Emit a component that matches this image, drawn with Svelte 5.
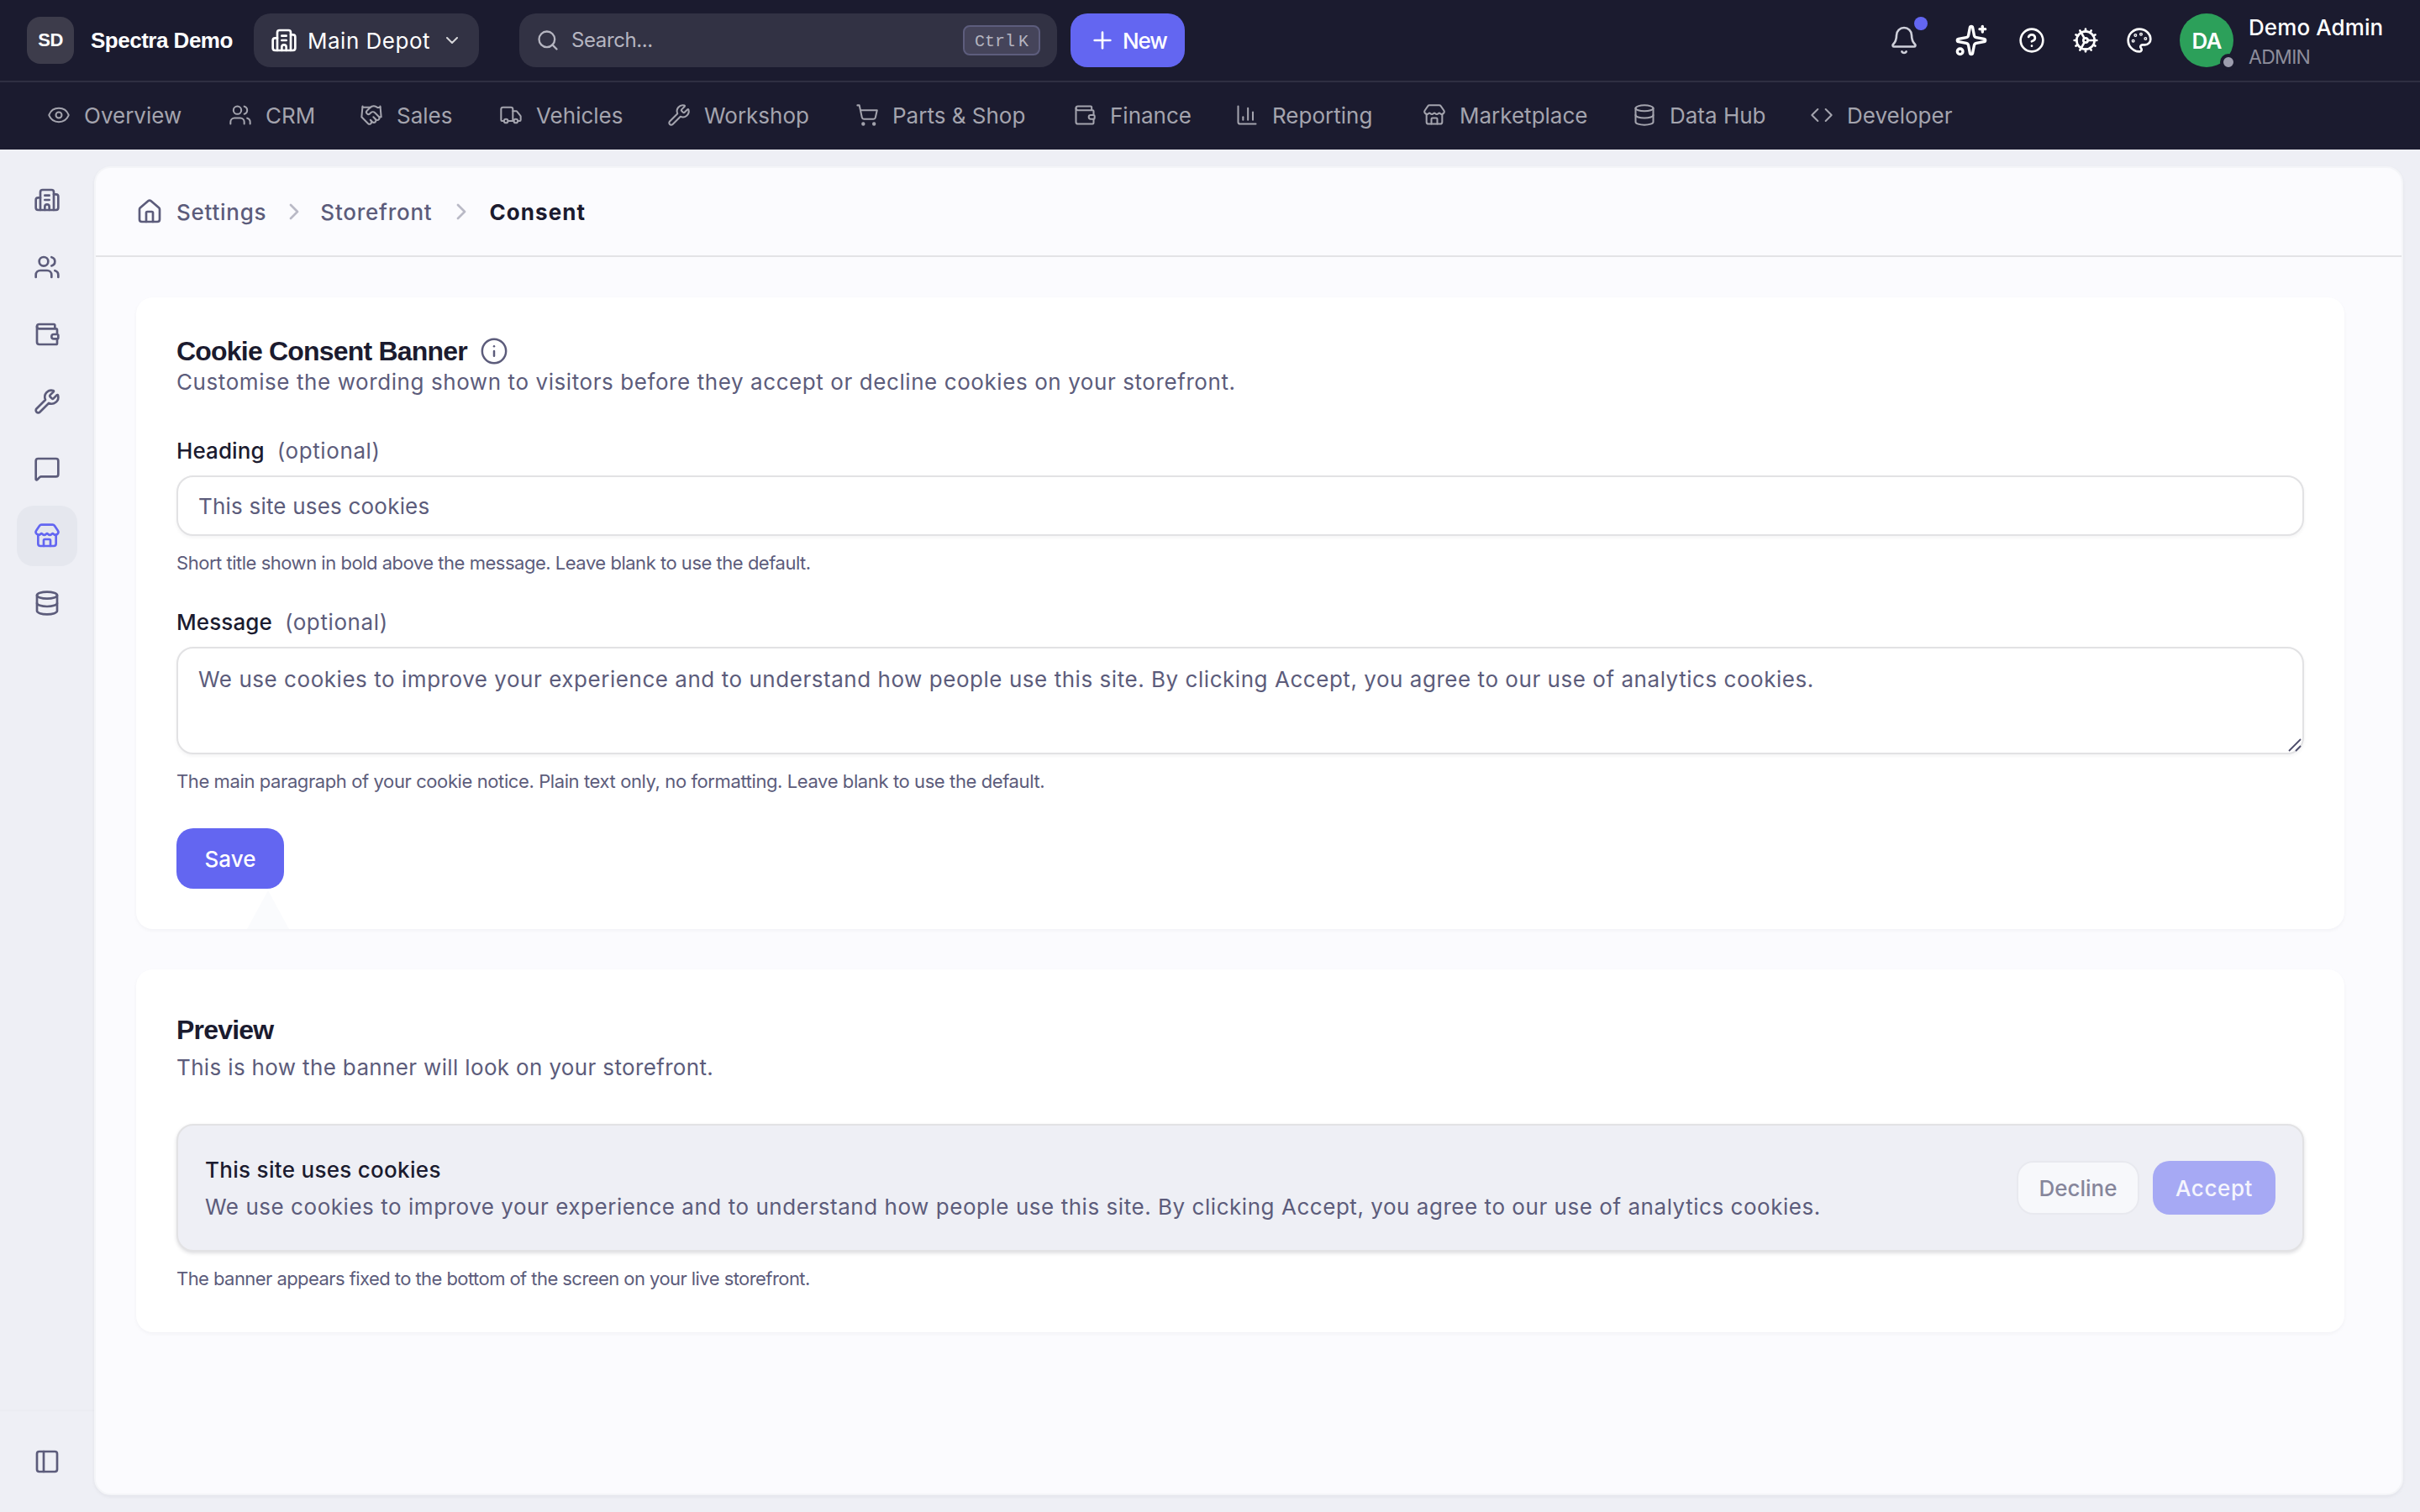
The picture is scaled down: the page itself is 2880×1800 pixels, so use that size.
<script>
    const icons = {
        building: '<path d="M10 12h4"/><path d="M10 8h4"/><path d="M14 21v-3a2 2 0 0 0-4 0v3"/><path d="M6 10H4a2 2 0 0 0-2 2v7a2 2 0 0 0 2 2h16a2 2 0 0 0 2-2V9a2 2 0 0 0-2-2h-2"/><path d="M6 21V5a2 2 0 0 1 2-2h8a2 2 0 0 1 2 2v16"/>',
        users: '<path d="M16 21v-2a4 4 0 0 0-4-4H6a4 4 0 0 0-4 4v2"/><path d="M16 3.128a4 4 0 0 1 0 7.744"/><path d="M22 21v-2a4 4 0 0 0-3-3.87"/><circle cx="9" cy="7" r="4"/>',
        eye: '<path d="M2.062 12.348a1 1 0 0 1 0-.696 10.75 10.75 0 0 1 19.876 0 1 1 0 0 1 0 .696 10.75 10.75 0 0 1-19.876 0"/><circle cx="12" cy="12" r="3"/>',
        handshake: '<path d="m11 17 2 2a1 1 0 1 0 3-3"/><path d="m14 14 2.5 2.5a1 1 0 1 0 3-3l-3.88-3.88a3 3 0 0 0-4.24 0l-.88.88a1 1 0 1 1-3-3l2.81-2.81a5.79 5.79 0 0 1 7.06-.87l.47.28a2 2 0 0 0 1.42.25L21 4"/><path d="m21 3 1 11h-2"/><path d="M3 3 2 14l6.5 6.5a1 1 0 1 0 3-3"/><path d="M3 4h8"/>',
        truck: '<path d="M14 18V6a2 2 0 0 0-2-2H4a2 2 0 0 0-2 2v11a1 1 0 0 0 1 1h2"/><path d="M15 18H9"/><path d="M19 18h2a1 1 0 0 0 1-1v-3.65a1 1 0 0 0-.22-.624l-3.48-4.35A1 1 0 0 0 17.52 8H14"/><circle cx="17" cy="18" r="2"/><circle cx="7" cy="18" r="2"/>',
        wrench: '<path d="M14.7 6.3a1 1 0 0 0 0 1.4l1.6 1.6a1 1 0 0 0 1.4 0l3.106-3.105c.32-.322.863-.22.983.218a6 6 0 0 1-8.259 7.057l-7.91 7.91a1 1 0 0 1-2.999-3l7.91-7.91a6 6 0 0 1 7.057-8.259c.438.12.54.662.219.984z"/>',
        cart: '<circle cx="8" cy="21" r="1"/><circle cx="19" cy="21" r="1"/><path d="M2.05 2.05h2l2.66 12.42a2 2 0 0 0 2 1.58h9.78a2 2 0 0 0 1.95-1.57l1.65-7.43H5.12"/>',
        wallet: '<path d="M19 7V4a1 1 0 0 0-1-1H5a2 2 0 0 0 0 4h15a1 1 0 0 1 1 1v4h-3a2 2 0 0 0 0 4h3a1 1 0 0 0 1-1v-2a1 1 0 0 0-1-1"/><path d="M3 5v14a2 2 0 0 0 2 2h15a1 1 0 0 0 1-1v-4"/>',
        chart: '<path d="M3 3v16a2 2 0 0 0 2 2h16"/><path d="M18 17V9"/><path d="M13 17V5"/><path d="M8 17v-3"/>',
        store: '<path d="M15 21v-5a1 1 0 0 0-1-1h-4a1 1 0 0 0-1 1v5"/><path d="M17.774 10.31a1.12 1.12 0 0 0-1.549 0 2.5 2.5 0 0 1-3.451 0 1.12 1.12 0 0 0-1.548 0 2.5 2.5 0 0 1-3.452 0 1.12 1.12 0 0 0-1.549 0 2.5 2.5 0 0 1-3.77-3.248l2.889-4.184A2 2 0 0 1 7 2h10a2 2 0 0 1 1.653.873l2.895 4.192a2.5 2.5 0 0 1-3.774 3.244"/><path d="M4 10.95V19a2 2 0 0 0 2 2h12a2 2 0 0 0 2-2v-8.05"/>',
        database: '<ellipse cx="12" cy="5" rx="9" ry="3"/><path d="M3 5V19A9 3 0 0 0 21 19V5"/><path d="M3 12A9 3 0 0 0 21 12"/>',
        code: '<path d="m16 18 6-6-6-6"/><path d="m8 6-6 6 6 6"/>',
        bell: '<path d="M10.268 21a2 2 0 0 0 3.464 0"/><path d="M3.262 15.326A1 1 0 0 0 4 17h16a1 1 0 0 0 .74-1.673C19.41 13.956 18 12.499 18 8A6 6 0 0 0 6 8c0 4.499-1.411 5.956-2.738 7.326"/>',
        sparkles: '<path d="M11.017 2.814a1 1 0 0 1 1.966 0l1.051 5.558a2 2 0 0 0 1.594 1.594l5.558 1.051a1 1 0 0 1 0 1.966l-5.558 1.051a2 2 0 0 0-1.594 1.594l-1.051 5.558a1 1 0 0 1-1.966 0l-1.051-5.558a2 2 0 0 0-1.594-1.594l-5.558-1.051a1 1 0 0 1 0-1.966l5.558-1.051a2 2 0 0 0 1.594-1.594z"/><path d="M20 2v4"/><path d="M22 4h-4"/><circle cx="4" cy="20" r="2"/>',
        help: '<circle cx="12" cy="12" r="10"/><path d="M9.09 9a3 3 0 0 1 5.83 1c0 2-3 3-3 3"/><path d="M12 17h.01"/>',
        cog: '<path d="M11 10.27 7 3.34"/><path d="m11 13.73-4 6.93"/><path d="M12 22v-2"/><path d="M12 2v2"/><path d="M14 12h8"/><path d="m17 20.66-1-1.73"/><path d="m17 3.34-1 1.73"/><path d="M2 12h2"/><path d="m20.66 17-1.73-1"/><path d="m20.66 7-1.73 1"/><path d="m3.34 17 1.73-1"/><path d="m3.34 7 1.73 1"/><circle cx="12" cy="12" r="2"/><circle cx="12" cy="12" r="8"/>',
        palette: '<path d="M12 22a1 1 0 0 1 0-20 10 9 0 0 1 10 9 5 5 0 0 1-5 5h-2.25a1.75 1.75 0 0 0-1.4 2.8l.3.4a1.75 1.75 0 0 1-1.4 2.8z"/><circle cx="13.5" cy="6.5" r=".5"/><circle cx="17.5" cy="10.5" r=".5"/><circle cx="6.5" cy="12.5" r=".5"/><circle cx="8.5" cy="7.5" r=".5"/>',
        home: '<path d="M15 21v-8a1 1 0 0 0-1-1h-4a1 1 0 0 0-1 1v8"/><path d="M3 10a2 2 0 0 1 .709-1.528l7-6a2 2 0 0 1 2.582 0l7 6A2 2 0 0 1 21 10v9a2 2 0 0 1-2 2H5a2 2 0 0 1-2-2z"/>',
        message: '<path d="M22 17a2 2 0 0 1-2 2H6.828a2 2 0 0 0-1.414.586l-2.202 2.202A.71.71 0 0 1 2 21.286V5a2 2 0 0 1 2-2h16a2 2 0 0 1 2 2z"/>',
        panel: '<rect width="18" height="18" x="3" y="3" rx="2"/><path d="M9 3v18"/>',
        search: '<path d="m21 21-4.34-4.34"/><circle cx="11" cy="11" r="8"/>',
        plus: '<path d="M5 12h14"/><path d="M12 5v14"/>',
        down: '<path d="m6 9 6 6 6-6"/>',
        right: '<path d="m9 18 6-6-6-6"/>',
        info: '<circle cx="12" cy="12" r="10"/><path d="M12 16v-4"/><path d="M12 8h.01"/>',
    };

    const nav = [
        { label: "Overview", icon: "eye", width: 116 },
        { label: "CRM", icon: "users", width: 56 },
        { label: "Sales", icon: "handshake", width: 66 },
        { label: "Vehicles", icon: "truck", width: 100 },
        { label: "Workshop", icon: "wrench", width: 124 },
        { label: "Parts & Shop", icon: "cart", width: 159 },
        { label: "Finance", icon: "wallet", width: 93 },
        { label: "Reporting", icon: "chart", width: 123 },
        { label: "Marketplace", icon: "store", width: 150 },
        { label: "Data Hub", icon: "database", width: 111 },
        { label: "Developer", icon: "code", width: 126 },
    ];

    const rail = ["building", "users", "wallet", "wrench", "message", "store", "database"];

    const defaultHeading = "This site uses cookies";
    const defaultMessage =
        "We use cookies to improve your experience and to understand how people use this site. By clicking Accept, you agree to our use of analytics cookies.";

    let heading = "";
    let message = "";
</script>

{#snippet icon(name, size = 32, stroke = 2)}
    <svg
        width={size}
        height={size}
        viewBox="0 0 24 24"
        fill="none"
        stroke="currentColor"
        stroke-width={stroke}
        stroke-linecap="round"
        stroke-linejoin="round"
    >{@html icons[name]}</svg>
{/snippet}

<div class="app">
    <header class="topbar">
        <div class="logo">SD</div>
        <span class="brand">Spectra Demo</span>
        <button class="depot">
            {@render icon("building", 32)}
            <span>Main Depot</span>
            {@render icon("down", 24)}
        </button>
        <div class="search">
            {@render icon("search", 28)}
            <span>Search...</span>
            <kbd>Ctrl K</kbd>
        </div>
        <button class="new">
            {@render icon("plus", 32)}
            <span>New</span>
        </button>
        <div class="tools">
            <span class="tool bell">
                {@render icon("bell", 36, 1.75)}
                <i class="badge"></i>
            </span>
            <span class="tool spark">{@render icon("sparkles", 40)}</span>
            <span class="tool">{@render icon("help", 32)}</span>
            <span class="tool">{@render icon("cog", 32)}</span>
            <span class="tool">{@render icon("palette", 32)}</span>
        </div>
        <div class="avatar">DA<i class="presence"></i></div>
        <div class="user">
            <span class="user-name">Demo Admin</span>
            <span class="user-role">ADMIN</span>
        </div>
    </header>

    <nav class="mainnav">
        {#each nav as item}
            <a href="#top">
                {@render icon(item.icon, 28, 1.75)}
                <span style="width: {item.width}px">{item.label}</span>
            </a>
        {/each}
    </nav>

    <div class="body">
        <aside class="rail">
            {#each rail as name}
                <a href="#top" class:active={name === "store"}>{@render icon(name)}</a>
            {/each}
            <div class="collapse">{@render icon("panel")}</div>
        </aside>

        <main class="panel">
            <div class="crumbs">
                {@render icon("home")}
                <span class="crumb first">Settings</span>
                <span class="sep">{@render icon("right")}</span>
                <span class="crumb">Storefront</span>
                <span class="sep last">{@render icon("right")}</span>
                <span class="crumb current">Consent</span>
            </div>

            <div class="content">
                <section class="card form">
                    <div class="title-row">
                        <h2>Cookie Consent Banner</h2>
                        {@render icon("info", 34, 1.75)}
                    </div>
                    <p class="desc wide">Customise the wording shown to visitors before they accept or decline cookies on your storefront.</p>

                    <label for="heading">Heading <span>(optional)</span></label>
                    <input id="heading" bind:value={heading} placeholder={defaultHeading} />
                    <p class="hint">Short title shown in bold above the message. Leave blank to use the default.</p>

                    <label for="message">Message <span>(optional)</span></label>
                    <div class="area">
                        <textarea id="message" bind:value={message} placeholder={defaultMessage}></textarea>
                        <svg class="grip" width="16" height="16" viewBox="0 0 16 16" fill="none" stroke="#4d4d6b" stroke-width="1.8">
                            <path d="M1 15 15 1M9 15l6-6" />
                        </svg>
                    </div>
                    <p class="hint long">The main paragraph of your cookie notice. Plain text only, no formatting. Leave blank to use the default.</p>

                    <div class="actions">
                        <button class="save">Save</button>
                        <i class="arrow"></i>
                    </div>
                </section>

                <section class="card preview">
                    <h2>Preview</h2>
                    <p class="desc">This is how the banner will look on your storefront.</p>
                    <div class="banner">
                        <div class="banner-text">
                            <strong>{heading || defaultHeading}</strong>
                            <p>{message || defaultMessage}</p>
                        </div>
                        <button class="decline" disabled>Decline</button>
                        <button class="accept" disabled>Accept</button>
                    </div>
                    <p class="hint short">The banner appears fixed to the bottom of the screen on your live storefront.</p>
                </section>
            </div>
        </main>
    </div>
</div>

<style>
    :global(body) {
        background: #eeeff5;
    }
    .app {
        width: 2880px;
        height: 1800px;
        display: flex;
        flex-direction: column;
        overflow: hidden;
        background: #eeeff5;
        color: #1b1b2f;
        font-family: Inter, "Liberation Sans", sans-serif;
        font-size: 26px;
    }
    .app :global(*) {
        box-sizing: border-box;
    }
    svg {
        display: block;
        flex: none;
    }
    button,
    input,
    textarea {
        font: inherit;
        border: none;
        margin: 0;
    }
    h2,
    p {
        margin: 0;
        white-space: nowrap;
    }
    a {
        color: inherit;
        text-decoration: none;
    }

    /* top bar */
    .topbar {
        height: 98px;
        flex: none;
        display: flex;
        align-items: center;
        padding: 0 44px 0 32px;
        background: #1b1b2f;
        border-bottom: 2px solid #2f2f42;
        color: #fff;
        white-space: nowrap;
    }
    .logo {
        width: 56px;
        height: 56px;
        border-radius: 16px;
        background: #3d3c4b;
        display: flex;
        align-items: center;
        justify-content: center;
        font: bold 22px "Liberation Sans", sans-serif;
        letter-spacing: -0.5px;
    }
    .brand {
        width: 194px;
        margin-left: 20px;
        font: bold 26px "Liberation Sans", sans-serif;
        letter-spacing: -0.5px;
    }
    .depot {
        width: 268px;
        height: 64px;
        border-radius: 20px;
        background: #323244;
        color: #fff;
        display: flex;
        align-items: center;
        padding: 0 20px;
        gap: 12px;
    }
    .depot span {
        width: 148px;
        padding-top: 1px;
        text-align: left;
        letter-spacing: 0.5px;
    }
    .depot svg:last-child {
        opacity: 0.8;
    }
    .search {
        width: 640px;
        height: 64px;
        margin-left: 48px;
        border-radius: 20px;
        background: #323244;
        color: #b5b5c0;
        display: flex;
        align-items: center;
        padding: 0 20px;
        gap: 14px;
        font-size: 24px;
        letter-spacing: -0.4px;
    }
    .search span {
        padding-bottom: 1px;
    }
    kbd {
        width: 92px;
        height: 36px;
        margin-left: auto;
        border: 2px solid #5d5d7d;
        border-radius: 8px;
        background: #45445a;
        font: 20px/36px "Liberation Mono", monospace;
        text-align: center;
        word-spacing: -8px;
        letter-spacing: 0;
    }
    .new {
        width: 136px;
        height: 64px;
        margin-left: 16px;
        border-radius: 20px;
        background: #6366f1;
        color: #fff;
        font-weight: 500;
        letter-spacing: -1.1px;
        display: flex;
        align-items: center;
        padding: 0 22px;
        gap: 8px;
    }
    .new span {
        padding-top: 1px;
    }
    .tools {
        margin-left: auto;
        display: flex;
        align-items: center;
    }
    .tool {
        width: 64px;
        display: flex;
        justify-content: center;
    }
    .bell {
        position: relative;
        color: #cfd0da;
        width: 80px;
    }
    .spark {
        width: 80px;
    }
    .badge {
        position: absolute;
        top: -10px;
        right: 12px;
        width: 16px;
        height: 16px;
        border-radius: 50%;
        background: #6366f1;
    }
    .avatar {
        position: relative;
        width: 64px;
        height: 64px;
        margin-left: 16px;
        border-radius: 50%;
        background: #2ca05a;
        display: flex;
        align-items: center;
        justify-content: center;
        font-weight: 600;
        letter-spacing: -0.8px;
    }
    .presence {
        position: absolute;
        right: -4px;
        bottom: -4px;
        width: 20px;
        height: 20px;
        border-radius: 50%;
        border: 4px solid #1b1b2f;
        background: #9d9dae;
    }
    .user {
        width: 160px;
        margin-left: 18px;
        padding-top: 2px;
        display: flex;
        flex-direction: column;
    }
    .user-name {
        font-weight: 500;
        line-height: 36px;
        letter-spacing: 0.1px;
    }
    .user-role {
        margin-top: 1px;
        font-size: 23px;
        letter-spacing: -0.7px;
        line-height: 32px;
        color: #8d8d9b;
    }

    /* section navigation */
    .mainnav {
        height: 80px;
        flex: none;
        display: flex;
        align-items: center;
        gap: 56px;
        padding: 0 56px 2px;
        background: #1b1b2f;
        color: #a4a4ae;
    }
    .mainnav a {
        display: flex;
        align-items: center;
        gap: 16px;
        white-space: nowrap;
    }

    .body {
        flex: 1;
        display: flex;
        padding: 20px 20px 20px 0;
    }
    .rail {
        width: 112px;
        display: flex;
        flex-direction: column;
        align-items: center;
        gap: 8px;
        padding-top: 4px;
        color: #5c5c7b;
    }
    .rail a {
        width: 72px;
        height: 72px;
        border-radius: 20px;
        display: flex;
        align-items: center;
        justify-content: center;
    }
    .rail .active {
        background: #e5e7ee;
        color: #6366f1;
    }
    .collapse {
        width: 112px;
        height: 102px;
        margin-top: auto;
        padding: 44px 40px 0;
        border-top: 2px solid #ebecf2;
    }

    .panel {
        flex: 1;
        border: 2px solid #f4f5f8;
        border-radius: 20px;
        background: #fbfbfe;
        box-shadow: 0 2px 4px rgba(27, 27, 47, 0.05);
    }
    .crumbs {
        height: 106px;
        display: flex;
        align-items: center;
        padding-left: 48px;
        border-bottom: 2px solid #e3e3e6;
        color: #5c5c7b;
        font-weight: 500;
        letter-spacing: 0.75px;
    }
    .first {
        margin-left: 16px;
    }
    .sep {
        margin: 0 15px 0 17px;
        color: #b9b9c6;
    }
    .sep.last {
        margin: 0 17px 0 19px;
    }
    .current {
        color: #1b1b2f;
        font-weight: 700;
        letter-spacing: 1.1px;
    }

    .content {
        display: flex;
        flex-direction: column;
        gap: 48px;
        padding: 48px 68px 0 48px;
    }
    .card {
        border-radius: 20px;
        background: #fff;
        padding: 48px;
        box-shadow: 0 2px 4px rgba(27, 27, 47, 0.04);
    }
    .form {
        height: 752px;
        padding-top: 46px;
    }
    .preview {
        height: 432px;
    }
    h2 {
        font: bold 32px/36px "Liberation Sans", sans-serif;
        letter-spacing: -0.8px;
    }
    .preview h2 {
        line-height: 48px;
    }
    .title-row {
        display: flex;
        align-items: center;
        gap: 15px;
        color: #5c5c7b;
    }
    .title-row h2 {
        color: #1b1b2f;
    }
    .desc {
        color: #5c5c7b;
        line-height: 38px;
        letter-spacing: 0.35px;
    }
    .desc.wide {
        letter-spacing: 0.58px;
    }
    .preview .desc {
        line-height: 42px;
    }
    label {
        display: block;
        margin: 42px 0 8px;
        line-height: 42px;
        font-weight: 500;
        letter-spacing: 0.1px;
    }
    label span {
        margin-left: 8px;
        color: #5c5c7b;
        font-weight: 400;
        letter-spacing: 0.6px;
    }
    .hint + label {
        margin-top: 34px;
    }
    input,
    textarea {
        display: block;
        width: 100%;
        height: 72px;
        padding: 0 24px;
        border: 2px solid #e2e2e4;
        border-radius: 20px;
        background: #fff;
        box-shadow: 0 2px 4px rgba(27, 27, 47, 0.05);
        color: #1b1b2f;
    }
    input {
        letter-spacing: 0.2px;
    }
    textarea {
        height: 128px;
        padding: 17px 24px 15px;
        line-height: 40px;
        letter-spacing: 0.54px;
        resize: none;
    }
    .area {
        position: relative;
    }
    .grip {
        position: absolute;
        right: 3px;
        bottom: 3px;
    }
    ::placeholder {
        color: #5c5c7b;
        opacity: 1;
    }
    .hint {
        margin-top: 16px;
        font-size: 22px;
        line-height: 32px;
        letter-spacing: -0.48px;
        color: #5c5c7b;
    }
    .hint.long {
        letter-spacing: -0.4px;
    }
    .hint.short {
        letter-spacing: -0.56px;
    }
    .actions {
        position: relative;
        margin-top: 40px;
    }
    .save {
        display: block;
        width: 128px;
        height: 72px;
        border-radius: 20px;
        background: #6366f1;
        color: #fff;
        font-weight: 500;
    }
    .arrow {
        position: absolute;
        left: 84px;
        top: 74px;
        width: 50px;
        height: 46px;
        background: #fafbfd;
        clip-path: polygon(50% 0, 100% 100%, 0 100%);
    }
    .banner {
        height: 152px;
        margin-top: 46px;
        display: flex;
        align-items: center;
        padding: 0 32px;
        border: 2px solid #e2e2e4;
        border-radius: 20px;
        background: #eeeff5;
        box-shadow: 0 2px 4px rgba(27, 27, 47, 0.15);
    }
    .banner-text {
        flex: 1;
        padding-top: 1px;
        line-height: 44px;
        color: #5c5c7b;
        letter-spacing: 0.54px;
    }
    .banner-text strong {
        display: block;
        color: #1b1b2f;
        font-weight: 500;
        letter-spacing: 0.3px;
    }
    .decline,
    .accept {
        width: 146px;
        height: 64px;
        border-radius: 20px;
        padding: 0;
        font-weight: 500;
    }
    .decline {
        margin-right: 16px;
        border: 2px solid #e8e9ef;
        background: #f7f8fb;
        color: #86869b;
    }
    .accept {
        background: #a6a9f4;
        color: #f5f5fd;
        letter-spacing: 0.6px;
    }
</style>
